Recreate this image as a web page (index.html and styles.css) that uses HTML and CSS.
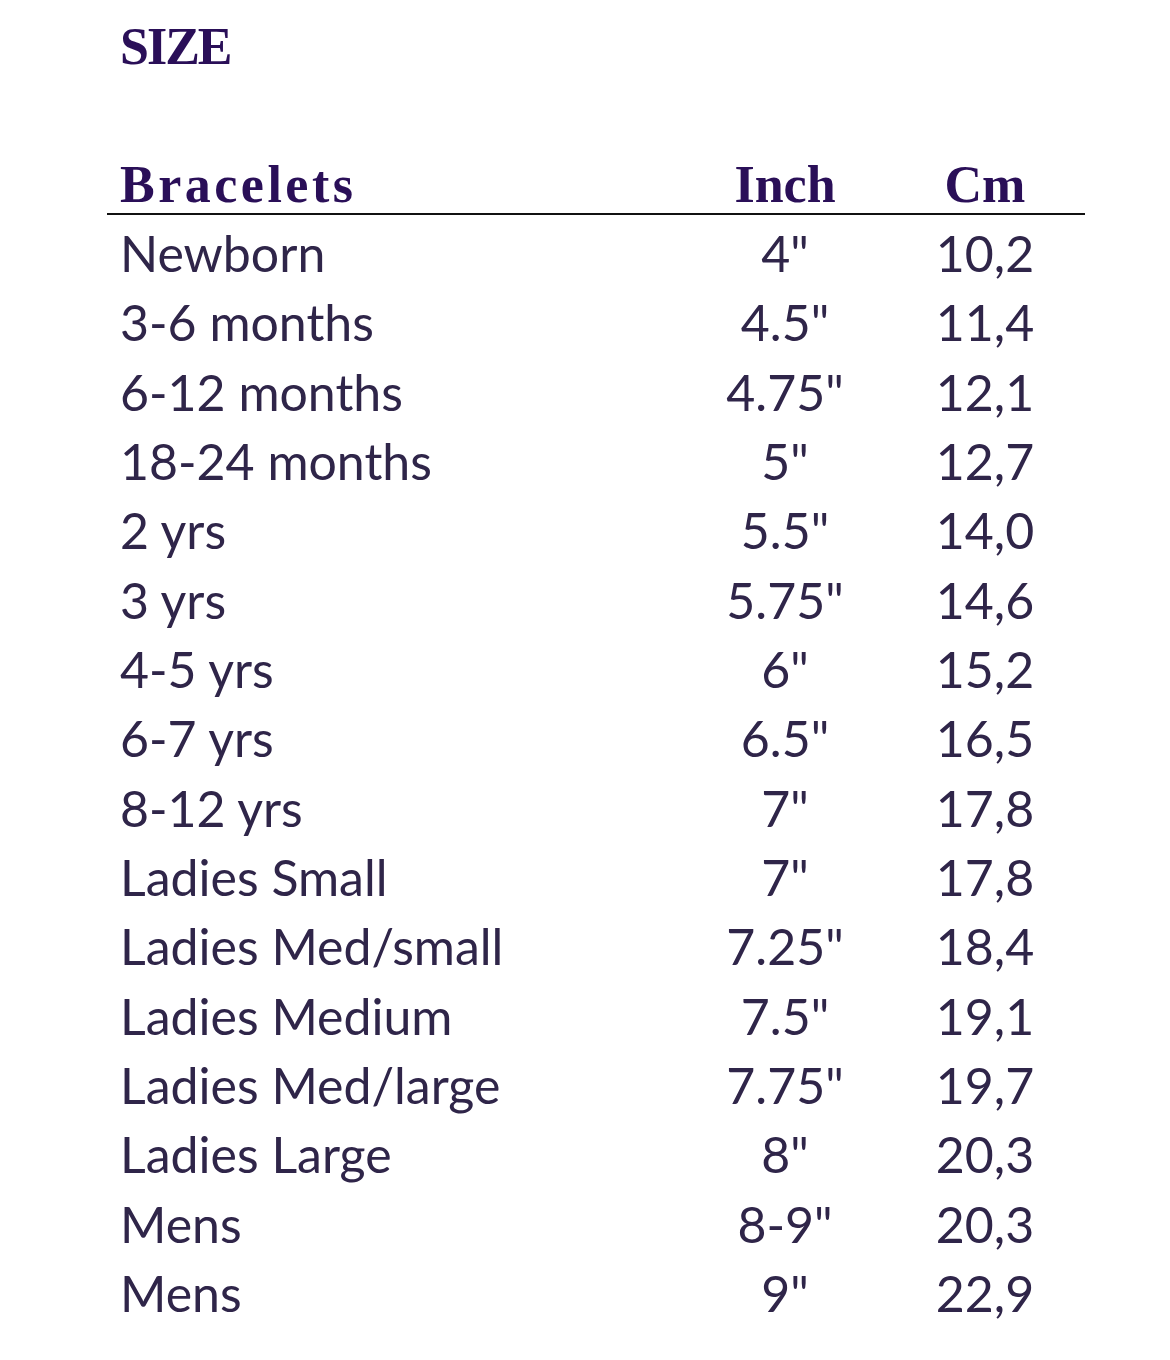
FILE: index.html
```html
<!DOCTYPE html>
<html>
<head>
<meta charset="utf-8">
<link rel="stylesheet" href="styles.css">
</head>
<body>
<div class="sheet">
  <h1 class="title">SIZE</h1>
  <div class="table">
    <div class="head">
      <div class="name">Bracelets</div>
      <div class="num">Inch</div>
      <div class="num">Cm</div>
    </div>
    <div class="body">
      <div class="row"><div class="name">Newborn</div><div class="num">4"</div><div class="num">10,2</div></div>
      <div class="row"><div class="name">3-6 months</div><div class="num">4.5"</div><div class="num">11,4</div></div>
      <div class="row"><div class="name">6-12 months</div><div class="num">4.75"</div><div class="num">12,1</div></div>
      <div class="row"><div class="name">18-24 months</div><div class="num">5"</div><div class="num">12,7</div></div>
      <div class="row"><div class="name">2 yrs</div><div class="num">5.5"</div><div class="num">14,0</div></div>
      <div class="row"><div class="name">3 yrs</div><div class="num">5.75"</div><div class="num">14,6</div></div>
      <div class="row"><div class="name">4-5 yrs</div><div class="num">6"</div><div class="num">15,2</div></div>
      <div class="row"><div class="name">6-7 yrs</div><div class="num">6.5"</div><div class="num">16,5</div></div>
      <div class="row"><div class="name">8-12 yrs</div><div class="num">7"</div><div class="num">17,8</div></div>
      <div class="row"><div class="name">Ladies Small</div><div class="num">7"</div><div class="num">17,8</div></div>
      <div class="row"><div class="name">Ladies Med/small</div><div class="num">7.25"</div><div class="num">18,4</div></div>
      <div class="row"><div class="name">Ladies Medium</div><div class="num">7.5"</div><div class="num">19,1</div></div>
      <div class="row"><div class="name">Ladies Med/large</div><div class="num">7.75"</div><div class="num">19,7</div></div>
      <div class="row"><div class="name">Ladies Large</div><div class="num">8"</div><div class="num">20,3</div></div>
      <div class="row"><div class="name">Mens</div><div class="num">8-9"</div><div class="num">20,3</div></div>
      <div class="row"><div class="name">Mens</div><div class="num">9"</div><div class="num">22,9</div></div>
    </div>
  </div>
</div>
</body>
</html>
```

FILE: styles.css
```css
html, body {
  margin: 0;
  padding: 0;
  background: #ffffff;
}

.sheet {
  width: 978px;
  padding: 21px 0 0 107px;
}

.title {
  margin: 0 0 0 13px;
  height: 52px;
  font: 700 52px/52px "Liberation Serif", serif;
  letter-spacing: -2px;
  color: #2a0f58;
}

.table {
  margin-top: 86px;
}

.head {
  display: grid;
  grid-template-columns: 578px 200px 200px;
  font: 700 52px/52px "Liberation Serif", serif;
  color: #2a0f58;
  padding-bottom: 2px;
  border-bottom: 2px solid #111111;
}

.head .name {
  padding-left: 13px;
  letter-spacing: 3.5px;
}

.body {
  padding-top: 4px;
}

.row {
  display: grid;
  grid-template-columns: 578px 200px 200px;
  font: 400 50px/69.33px "Lato", sans-serif;
  color: #2f2549;
}

.row .name {
  padding-left: 13px;
}

.num {
  text-align: center;
}
```
